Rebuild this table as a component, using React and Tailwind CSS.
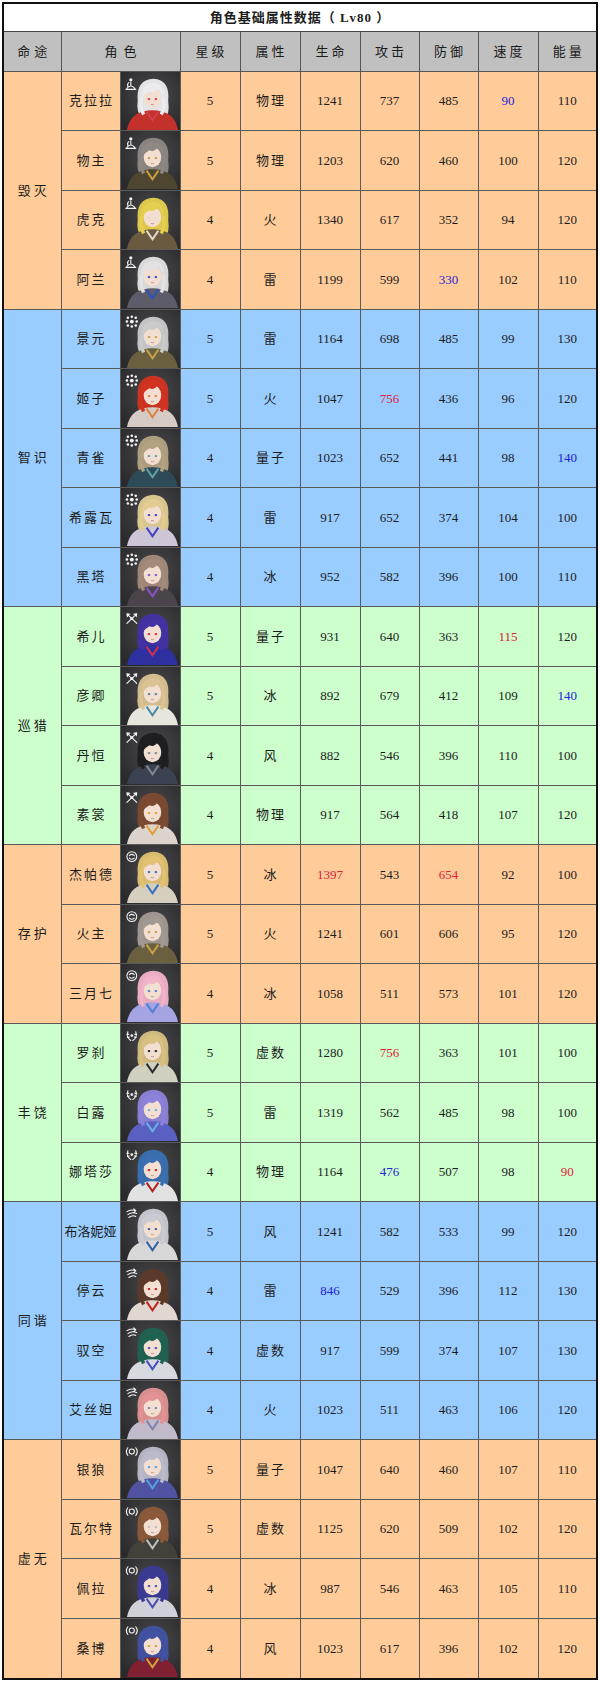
import React from 'react';

// colours of the path groups
const BG = {
  orange: 'bg-[#ffcc99]',
  blue: 'bg-[#99ccff]',
  green: 'bg-[#ccffcc]',
};

const NUM_COLOR = {
  b: 'text-[#1f24d8]',
  r: 'text-[#e0203c]',
};

// hair, cloth, eyes / accent
const GROUPS = [
  {
    path: '毁灭', bg: 'orange', icon: 'destruction',
    rows: [
      ['克拉拉', 5, '物理', 1241, 737, 485, 90, 110, { spd: 'b' }, ['#ececf0', '#c4302a', '#d04050']],
      ['物主', 5, '物理', 1203, 620, 460, 100, 120, {}, ['#8d8884', '#4e4630', '#c8a040']],
      ['虎克', 4, '火', 1340, 617, 352, 94, 120, {}, ['#e6cf4e', '#6a5a40', '#e2dacb']],
      ['阿兰', 4, '雷', 1199, 599, 330, 102, 110, { def: 'b' }, ['#e2e2e2', '#5c5c6a', '#3050c0']],
    ],
  },
  {
    path: '智识', bg: 'blue', icon: 'erudition',
    rows: [
      ['景元', 5, '雷', 1164, 698, 485, 99, 130, {}, ['#cacaca', '#6a6040', '#c8a048']],
      ['姬子', 5, '火', 1047, 756, 436, 96, 120, { atk: 'r' }, ['#d23220', '#d4ccc4', '#e08040']],
      ['青雀', 4, '量子', 1023, 652, 441, 98, 140, { en: 'b' }, ['#b2a282', '#2e4a58', '#60a0a8']],
      ['希露瓦', 4, '雷', 917, 652, 374, 104, 100, {}, ['#e2cc92', '#cec6d6', '#4040c0']],
      ['黑塔', 4, '冰', 952, 582, 396, 100, 110, {}, ['#a48a7a', '#4c444c', '#8a52c8']],
    ],
  },
  {
    path: '巡猎', bg: 'green', icon: 'hunt',
    rows: [
      ['希儿', 5, '量子', 931, 640, 363, 115, 120, { spd: 'r' }, ['#4232a4', '#2e30a0', '#d03050']],
      ['彦卿', 5, '冰', 892, 679, 412, 109, 140, { en: 'b' }, ['#dac292', '#e6e6de', '#4a8aa0']],
      ['丹恒', 4, '风', 882, 546, 396, 110, 100, {}, ['#1e1e20', '#3a4252', '#808890']],
      ['素裳', 4, '物理', 917, 564, 418, 107, 120, {}, ['#7c4a30', '#dcd4cc', '#e0a030']],
    ],
  },
  {
    path: '存护', bg: 'orange', icon: 'preservation',
    rows: [
      ['杰帕德', 5, '冰', 1397, 543, 654, 92, 100, { hp: 'r', def: 'r' }, ['#e2c272', '#d6cebe', '#3070c0']],
      ['火主', 5, '火', 1241, 601, 606, 95, 120, {}, ['#a29a92', '#6a6040', '#c8a048']],
      ['三月七', 4, '冰', 1058, 511, 573, 101, 120, {}, ['#f2b2ca', '#a4a4e2', '#5080d0']],
    ],
  },
  {
    path: '丰饶', bg: 'green', icon: 'abundance',
    rows: [
      ['罗刹', 5, '虚数', 1280, 756, 363, 101, 100, { atk: 'r' }, ['#d8c082', '#cfd0c0', '#2a2a2a']],
      ['白露', 5, '雷', 1319, 562, 485, 98, 100, {}, ['#8c82da', '#5a60c2', '#6ab0e0']],
      ['娜塔莎', 4, '物理', 1164, 476, 507, 98, 90, { atk: 'b', en: 'r' }, ['#3a70b2', '#e2e2e2', '#b02020']],
    ],
  },
  {
    path: '同谐', bg: 'blue', icon: 'harmony',
    rows: [
      ['布洛妮娅', 5, '风', 1241, 582, 533, 99, 120, {}, ['#cacad2', '#d8d8d8', '#3060a0']],
      ['停云', 4, '雷', 846, 529, 396, 112, 130, { hp: 'b' }, ['#5c3a2a', '#e0d8d0', '#c02020']],
      ['驭空', 4, '虚数', 917, 599, 374, 107, 130, {}, ['#206252', '#d8d8e0', '#4050c0']],
      ['艾丝妲', 4, '火', 1023, 511, 463, 106, 120, {}, ['#e29292', '#c2bacb', '#8080b0']],
    ],
  },
  {
    path: '虚无', bg: 'orange', icon: 'nihility',
    rows: [
      ['银狼', 5, '量子', 1047, 640, 460, 107, 110, {}, ['#babaca', '#5252a2', '#52a2e2']],
      ['瓦尔特', 5, '虚数', 1125, 620, 509, 102, 120, {}, ['#8c5a3a', '#42423a', '#c0c0c0']],
      ['佩拉', 4, '冰', 987, 546, 463, 105, 110, {}, ['#3a3a92', '#d0d0d8', '#4a4ab0']],
      ['桑博', 4, '风', 1023, 617, 396, 102, 120, {}, ['#4252a2', '#802030', '#d0a040']],
    ],
  },
];

const PathIcon = ({ type }) => {
  const s = { stroke: '#f4f4f4', strokeWidth: 1.1, fill: 'none', strokeLinecap: 'round' };
  switch (type) {
    case 'destruction':
      return (
        <g transform="translate(5 6)">
          <circle cx="5" cy="2" r="1.6" fill="#f4f4f4" />
          <path d="M5 4 L5 8 M1 11 Q5 6 9 11 M0 12 L10 12 M2 9 Q1 6 3 5" {...s} />
        </g>
      );
    case 'erudition':
      return (
        <g transform="translate(5 6)" fill="#f4f4f4">
          {[[2, 2], [6, 1], [10, 2], [1, 6], [11, 6], [2, 10], [6, 11], [10, 10]].map(([x, y], i) => (
            <circle key={i} cx={x} cy={y} r="1.3" />
          ))}
          <circle cx="6" cy="6" r="2" />
        </g>
      );
    case 'hunt':
      return (
        <g transform="translate(5 6)">
          <path d="M1 1 L11 11 M11 1 L1 11 M1 1 L4 1.5 M1 1 L1.5 4 M11 1 L8 1.5 M11 1 L10.5 4" {...s} />
          <circle cx="6" cy="6" r="1.5" fill="#f4f4f4" />
        </g>
      );
    case 'preservation':
      return (
        <g transform="translate(5 6)">
          <circle cx="6" cy="6" r="5" {...s} />
          <path d="M3.5 5 Q6 2.5 8.5 5 M3.5 7.5 Q6 10 8.5 7.5" {...s} />
        </g>
      );
    case 'abundance':
      return (
        <g transform="translate(5 6)">
          <path d="M2 2 Q0 8 5 11 M10 2 Q12 8 7 11 M1 5 L3 4.5 M11 5 L9 4.5 M1.5 8 L3.5 7.5 M10.5 8 L8.5 7.5" {...s} />
          <circle cx="6" cy="6" r="1.4" fill="#f4f4f4" />
        </g>
      );
    case 'harmony':
      return (
        <g transform="translate(5 6)">
          <path d="M1 4 Q5 1 10 3 M2 7 Q6 4 11 6 M3 10 Q7 7 10 9 M8 1 L10 3 L8 5" {...s} />
        </g>
      );
    default:
      return (
        <g transform="translate(5 6)">
          <circle cx="6" cy="6" r="2.6" {...s} />
          <path d="M2 2 Q-1 6 2 10 M10 2 Q13 6 10 10" {...s} />
        </g>
      );
  }
};

const Portrait = ({ colors, icon, id }) => {
  const [hair, cloth, accent] = colors;
  return (
    <svg viewBox="0 0 60 60" preserveAspectRatio="none" className="block w-full h-full">
      <defs>
        <radialGradient id={`g${id}`} cx="55%" cy="40%" r="70%">
          <stop offset="0%" stopColor="#4a4a4e" />
          <stop offset="100%" stopColor="#2a2a2c" />
        </radialGradient>
      </defs>
      <rect width="60" height="60" fill={`url(#g${id})`} />
      {/* back hair */}
      <path d="M17 30 Q15 8 33 7 Q50 8 48 30 Q50 44 44 48 L22 48 Q15 42 17 30 Z" fill={hair} opacity="0.95" />
      {/* body */}
      <path d="M6 60 Q9 44 22 41 Q32 38 42 41 Q55 44 58 60 Z" fill={cloth} />
      <path d="M26 41 L32 50 L38 41" fill="none" stroke={accent} strokeWidth="2" />
      {/* face */}
      <ellipse cx="32" cy="27" rx="9" ry="10.5" fill="#f2dfd2" />
      {/* fringe */}
      <path d="M21 27 Q20 12 33 11 Q45 12 43 27 Q41 19 37 17 Q34 22 29 20 Q25 22 21 27 Z" fill={hair} />
      <path d="M21 26 Q19 36 23 44 M43 26 Q45 36 41 44" stroke={hair} strokeWidth="3.5" fill="none" />
      {/* eyes */}
      <ellipse cx="28.5" cy="28" rx="1.4" ry="1.1" fill={accent} />
      <ellipse cx="35.5" cy="28" rx="1.4" ry="1.1" fill={accent} />
      <path d="M30.5 33.5 Q32 34.3 33.5 33.5" stroke="#b07070" strokeWidth="0.7" fill="none" />
      <PathIcon type={icon} />
    </svg>
  );
};

const Num = ({ v, c }) => <span className={c ? NUM_COLOR[c] : ''}>{v}</span>;

const HEAD = ['星级', '属性', '生命', '攻击', '防御', '速度', '能量'];

export default function App() {
  let n = 0;
  return (
    <div className="w-[600px] min-h-[1681px] bg-white pt-[2px] pl-[2px] font-['Liberation_Serif','Noto_Sans_CJK_SC',serif] text-[13px] text-[#1c1c1c]">
      <div className="w-[596px] border-2 border-[#111]">
        <table className="table-fixed border-collapse border-hidden w-[592px]">
          <colgroup>
            <col className="w-[57px]" />
            <col className="w-[59px]" />
            <col className="w-[60px]" />
            <col className="w-[60px]" />
            <col className="w-[60px]" />
            <col className="w-[60px]" />
            <col className="w-[59px]" />
            <col className="w-[59px]" />
            <col className="w-[60px]" />
            <col className="w-[58px]" />
          </colgroup>
          <thead>
            <tr className="h-[27px]">
              <th colSpan={10} className="bg-white border border-[#444] font-semibold text-center tracking-[1px] p-0 leading-none">
                角色基础属性数据（ Lv80 ）
              </th>
            </tr>
            <tr className="h-[40px] bg-[#c0c0c0]">
              <th className="border border-[#555] font-normal tracking-[4px] pl-[4px] p-0 leading-none">命途</th>
              <th colSpan={2} className="border border-[#555] font-normal tracking-[6px] pl-[6px] p-0 leading-none">角色</th>
              {HEAD.map((h) => (
                <th key={h} className="border border-[#555] font-normal tracking-[3px] pl-[3px] p-0 leading-none">{h}</th>
              ))}
            </tr>
          </thead>
          <tbody>
            {GROUPS.map((g) =>
              g.rows.map((r, i) => {
                const [name, star, elem, hp, atk, def, spd, en, hl, colors] = r;
                const id = n++;
                const cell = `border border-[#5a5a5a] text-center p-0 leading-none ${BG[g.bg]}`;
                return (
                  <tr key={name} className="h-[59.5px]">
                    {i === 0 && (
                      <td rowSpan={g.rows.length} className={`${cell} tracking-[3px] pl-[3px]`}>
                        {g.path}
                      </td>
                    )}
                    <td className={`${cell} whitespace-nowrap ${name.length > 3 ? 'tracking-[0px]' : 'tracking-[2px] pl-[2px]'}`}>{name}</td>
                    <td className="border border-[#5a5a5a] p-0 bg-[#2c2c2e] leading-none">
                      <div className="w-full h-[58px]">
                        <Portrait colors={colors} icon={g.icon} id={id} />
                      </div>
                    </td>
                    <td className={cell}>{star}</td>
                    <td className={`${cell} tracking-[2px] pl-[2px]`}>{elem}</td>
                    <td className={cell}><Num v={hp} c={hl.hp} /></td>
                    <td className={cell}><Num v={atk} c={hl.atk} /></td>
                    <td className={cell}><Num v={def} c={hl.def} /></td>
                    <td className={cell}><Num v={spd} c={hl.spd} /></td>
                    <td className={cell}><Num v={en} c={hl.en} /></td>
                  </tr>
                );
              })
            )}
          </tbody>
        </table>
      </div>
    </div>
  );
}
